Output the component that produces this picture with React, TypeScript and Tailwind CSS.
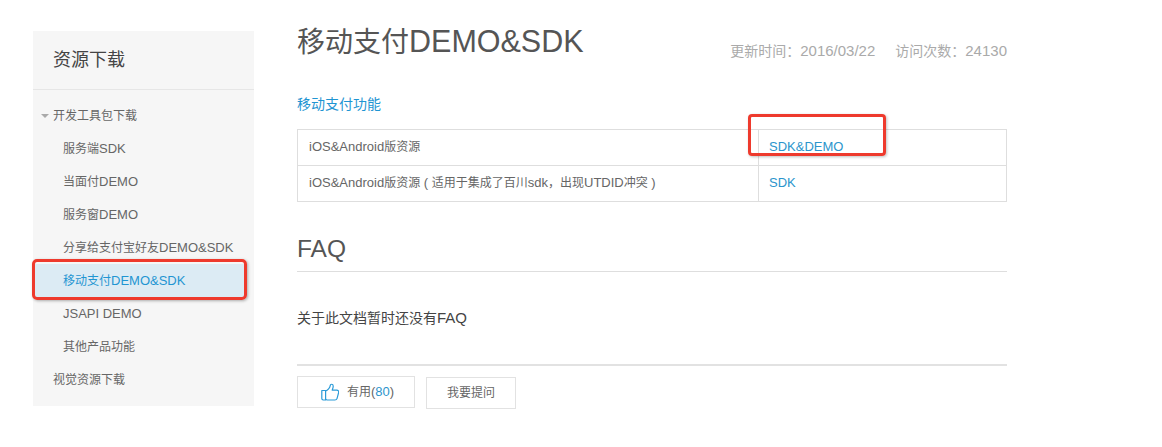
import React from "react";

const font = { fontFamily: '"Liberation Sans", "Noto Sans CJK SC", sans-serif' };

function Mix({ text, cjk }: { text: string; cjk: string }) {
  const parts = text.split(/([\u3000-\u9fff\uff00-\uffef]+)/);
  return (
    <>
      {parts.map((p, i) =>
        i % 2 === 1 ? (
          <span key={i} className={cjk}>{p}</span>
        ) : (
          <React.Fragment key={i}>{p}</React.Fragment>
        )
      )}
    </>
  );
}

function Thumb() {
  return (
    <svg width="18" height="18" viewBox="0 0 18 18" fill="none" stroke="#2b9bd8" strokeWidth="1.2" strokeLinejoin="round">
      <path d="M0.8 7.5h3.8v9.5H2.2a1.4 1.4 0 0 1-1.4-1.4z" />
      <path d="M4.6 8c2-.6 4.4-3.2 4.6-5.4.1-1.7 2.8-2 3 .4.1 1.4-.6 3-1 4.2h4.6c1.4 0 2.2 1.2 1.8 2.4l-1.6 6c-.3.9-1 1.4-2 1.4H6.2c-.7 0-1.1-.3-1.6-.8" />
    </svg>
  );
}

const side = "text-[12px]";

export default function App() {
  const subs = ["服务端SDK", "当面付DEMO", "服务窗DEMO", "分享给支付宝好友DEMO&SDK"];
  return (
    <div className="flex h-[447px] w-[1162px] overflow-hidden bg-white pl-[33px] text-[#666]" style={font}>
      <aside className="mt-[31px] h-[375px] w-[221px] shrink-0 bg-[#f6f6f6]">
        <div className="flex h-[59px] items-center border-b border-[#e6e6e6] pl-5 text-[18px] text-[#444]">资源下载</div>
        <nav className="pt-[9px] text-[13px] text-[#666]">
          <div className="relative flex h-[33px] items-center pl-5">
            <span className="absolute left-2 top-[15px] h-0 w-0 border-x-[4px] border-t-[4px] border-x-transparent border-t-[#aaa]" />
            <span><Mix text="开发工具包下载" cjk={side} /></span>
          </div>
          {subs.map((s) => (
            <div key={s} className="flex h-[33px] items-center pl-[30px]"><span><Mix text={s} cjk={side} /></span></div>
          ))}
          <div className="relative flex h-[33px] w-[213px] items-center bg-[#dcebf4] pl-[30px] text-[#1f95d2]">
            <span><Mix text="移动支付DEMO&SDK" cjk={side} /></span>
            <span className="absolute -left-[1px] top-[-5px] h-[41px] w-[215px] rounded-[5px] border-[3px] border-[#ee3a2d] shadow-[1px_1px_3px_rgba(0,0,0,0.3)]" />
          </div>
          <div className="flex h-[33px] items-center pl-[30px]">JSAPI DEMO</div>
          <div className="flex h-[33px] items-center pl-[30px]"><span><Mix text="其他产品功能" cjk={side} /></span></div>
          <div className="flex h-[33px] items-center pl-5"><span><Mix text="视觉资源下载" cjk={side} /></span></div>
        </nav>
      </aside>
      <main className="ml-[43px] w-[710px] shrink-0">
        <header className="mt-[23px] flex h-[38px] items-center justify-between">
          <h1 className="text-[30.5px] font-normal leading-[38px] text-[#555]"><Mix text="移动支付DEMO&SDK" cjk="text-[28px]" /></h1>
          <div className="mt-[18px] text-[15px] text-[#aaa]">
            <span className="mr-[20px]"><Mix text="更新时间：2016/03/22" cjk="text-[14px]" /></span>
            <span><Mix text="访问次数：24130" cjk="text-[14px]" /></span>
          </div>
        </header>
        <h2 className="mt-[33px] text-[14px] font-normal leading-5 text-[#1f95d2]">移动支付功能</h2>
        <div className="relative mt-[15px] border border-[#dedede] text-[13px]">
          <div className="flex h-[36px] items-center border-b border-[#dedede]">
            <div className="flex h-full w-[461px] items-center border-r border-[#dedede] pb-[2px] pl-[11px]"><span><Mix text="iOS&Android版资源" cjk={side} /></span></div>
            <div className="pb-[2px] pl-[10px] text-[#2b95cc]">SDK&amp;DEMO</div>
          </div>
          <div className="flex h-[35px] items-center">
            <div className="flex h-full w-[461px] items-center border-r border-[#dedede] pb-[2px] pl-[11px]"><span><Mix text="iOS&Android版资源 ( 适用于集成了百川sdk，出现UTDID冲突 )" cjk={side} /></span></div>
            <div className="pb-[2px] pl-[10px] text-[#2b95cc]">SDK</div>
          </div>
          <span className="absolute left-[450px] top-[-16px] h-[42px] w-[138px] rounded-[4px] border-[3px] border-[#ee3a2d] shadow-[1px_1px_3px_rgba(0,0,0,0.25)]" />
        </div>
        <h2 className="mt-[32px] border-b border-[#dedede] pb-[7px] text-[24.5px] font-normal leading-[30px] text-[#555]">FAQ</h2>
        <p className="mt-[36px] text-[15px] leading-5 text-[#444]"><Mix text="关于此文档暂时还没有FAQ" cjk="text-[14px]" /></p>
        <div className="mt-[36px] border-t-2 border-[#e2e2e2] pt-[10px]">
          <div className="flex items-start gap-[11px] text-[13px]">
            <button className="flex h-[32px] w-[118px] items-center justify-start gap-[8px] border border-[#e2e2e2] pl-[23px] text-[#666]">
              <Thumb />
              <span><Mix text="有用" cjk={side} />(<span className="text-[#2b95cc]">80</span>)</span>
            </button>
            <button className="mt-[1px] h-[32px] w-[90px] border border-[#e2e2e2] text-[12px] text-[#666]">我要提问</button>
          </div>
        </div>
      </main>
    </div>
  );
}
